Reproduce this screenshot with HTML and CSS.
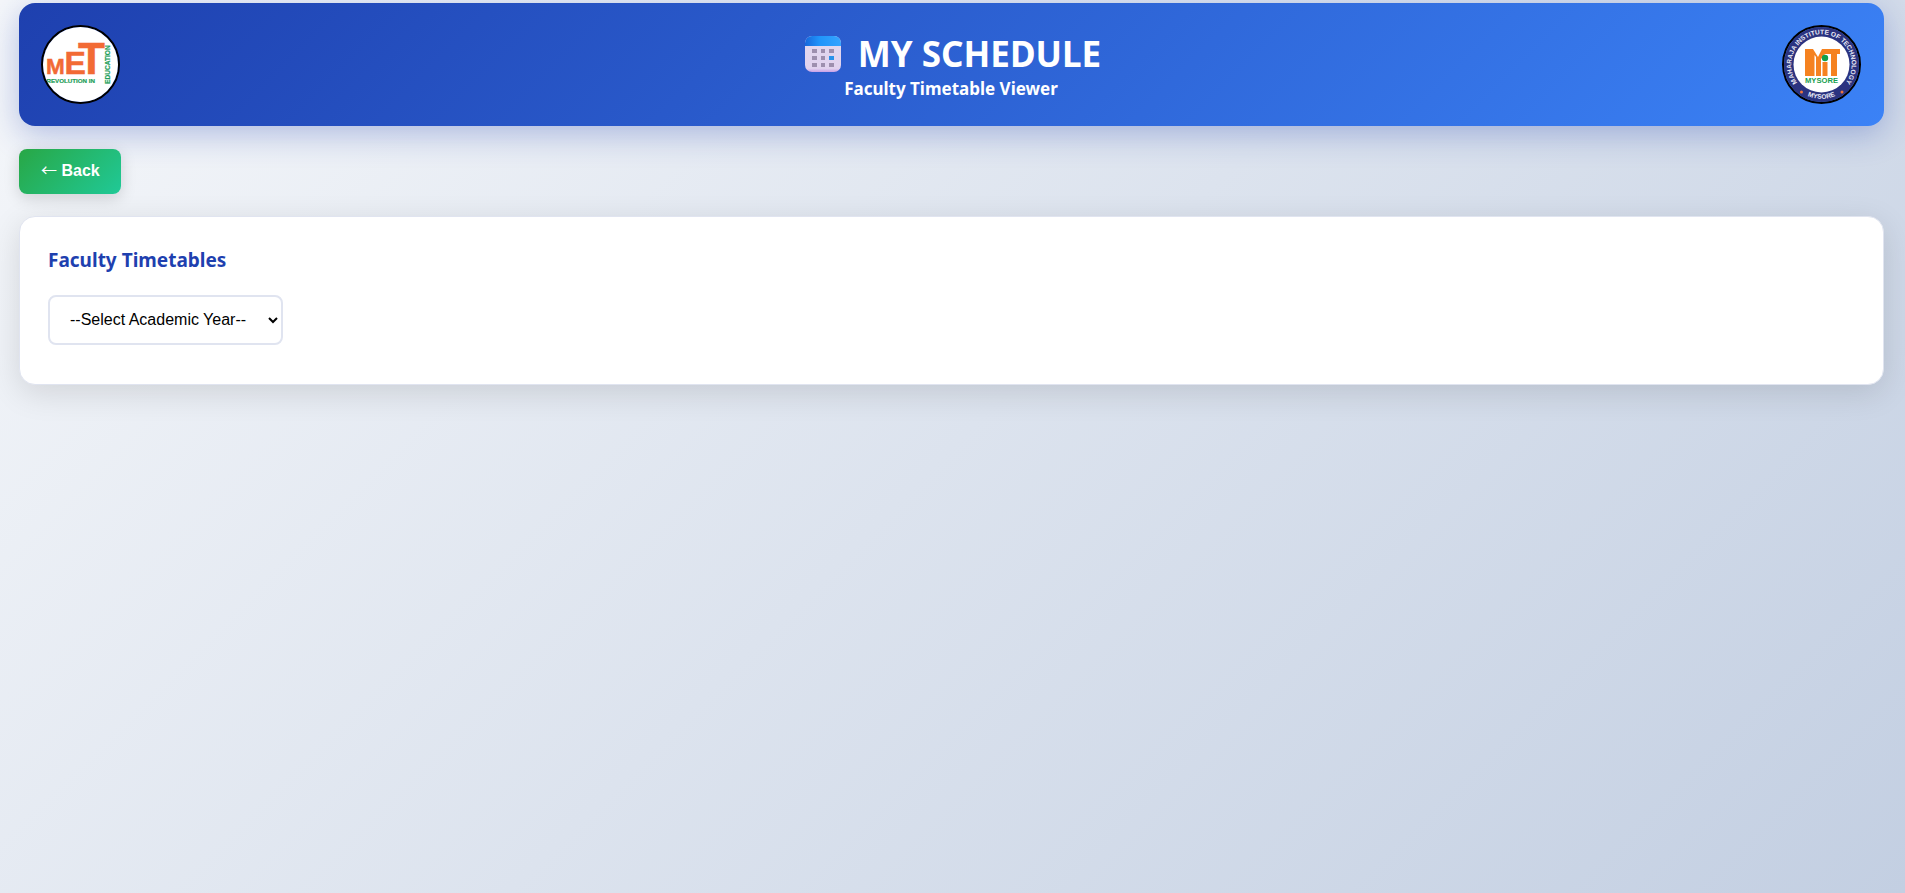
FILE: index.html
```html
<!DOCTYPE html>
<html lang="en">
<head>
    <meta charset="UTF-8">
    <meta name="viewport" content="width=device-width, initial-scale=1.0">
    <title>My Schedule</title>
    <link rel="stylesheet" href="styles.css">
</head>
<body>

    <!-- Header -->
    <header class="header">
        <svg class="logo" viewBox="0 0 75 75" role="img" aria-label="MET logo">
            <rect width="75" height="75" fill="#fff"/>
            <g class="logo-text" fill="#f26a35" stroke="#f26a35" stroke-width="0.5">
                <text x="3" y="47" font-size="22.5">M</text>
                <text x="21.5" y="47" font-size="32">E</text>
                <text x="35" y="47" font-size="44">T</text>
            </g>
            <g class="logo-text" fill="#1fa05a" stroke="#1fa05a" stroke-width="0.2">
                <text x="3.5" y="56" font-size="6.2">REVOLUTION IN</text>
                <text transform="translate(66.5 57) rotate(-90)" font-size="6.6">EDUCATION</text>
            </g>
        </svg>

        <div class="header-title">
            <h1>
                <svg class="calendar-icon" viewBox="0 0 36 36" aria-hidden="true">
                    <defs>
                        <linearGradient id="calTop" x1="0" y1="0" x2="1" y2="0">
                            <stop offset="0" stop-color="#1767dc"/>
                            <stop offset="0.4" stop-color="#2094fa"/>
                            <stop offset="1" stop-color="#35a4ff"/>
                        </linearGradient>
                        <linearGradient id="calPage" x1="0" y1="0" x2="0" y2="1">
                            <stop offset="0" stop-color="#e2d9ef"/>
                            <stop offset="0.9" stop-color="#e0d2ee"/>
                            <stop offset="1" stop-color="#c9a0e8"/>
                        </linearGradient>
                    </defs>
                    <rect width="36" height="36" rx="7" fill="url(#calPage)"/>
                    <path d="M0 10V7a7 7 0 0 1 7-7h22a7 7 0 0 1 7 7v3z" fill="url(#calTop)"/>
                    <path d="M7 13h5v4h-5zM16 13h4v4h-4zM24 13h5v4h-5zM7 20h5v4h-5zM16 20h4v4h-4zM7 27h5v4h-5zM16 27h4v4h-4zM24 27h5v4h-5z" fill="#9d8fae"/>
                    <path d="M24 20h5v4h-5z" fill="#2a92ea"/>
                </svg>
                MY SCHEDULE
            </h1>
            <p>Faculty Timetable Viewer</p>
        </div>

        <svg class="logo" viewBox="0 0 75 75" role="img" aria-label="Maharaja Institute of Technology Mysore logo">
            <defs>
                <path id="ringTop" d="M15.200 57.900A30.200 30.200 0 1 1 59.800 57.900"/>
                <path id="ringBottom" d="M17.500 65.400A34.400 34.400 0 0 0 57.500 65.400"/>
            </defs>
            <rect width="75" height="75" fill="#2b3380"/>
            <circle cx="37.5" cy="37.5" r="28" fill="#fff"/>
            <g class="logo-text" fill="#e9eaf5">
                <text text-anchor="middle" font-size="6.6"><textPath href="#ringTop" startOffset="50%">MAHARAJA INSTITUTE OF TECHNOLOGY</textPath></text>
                <text text-anchor="middle" font-size="6.6"><textPath href="#ringBottom" startOffset="50%">MYSORE</textPath></text>
            </g>
            <circle cx="17.5" cy="65" r="1.5" fill="#f0743a"/>
            <circle cx="58" cy="65" r="1.5" fill="#f0743a"/>
            <g fill="#f58220">
                <path d="M21 49V22h8l5 8 4-8h18v5h-3v22h-6V27h-6l-4 5v17h-5V30l-1.500-2v21z"/>
                <path d="M38.500 35h5v14h-5z"/>
            </g>
            <circle cx="41" cy="31" r="3.200" fill="#10a04c"/>
            <text class="logo-text" x="37.5" y="55.5" font-size="7.6" text-anchor="middle" fill="#18a050">MYSORE</text>
        </svg>
    </header>

    <button type="button" class="back-btn"><span class="arrow">←</span> Back</button>

    <!-- Timetable filter -->
    <main class="card">
        <h2>Faculty Timetables</h2>
        <select id="academicYear" name="academic_year" aria-label="Academic Year">
            <option value="">--Select Academic Year--</option>
        </select>
    </main>

</body>
</html>
```
FILE: styles.css
```css
* {
    box-sizing: border-box;
}

body {
    margin: 0;
    padding: 3px 21px 3px 19px;
    min-height: 100vh;
    font-family: "Segoe UI", "Noto Sans", sans-serif;
    background: linear-gradient(135deg, #f5f7fa 0%, #c3cfe2 100%);
}

/* Header */
.header {
    display: flex;
    justify-content: space-between;
    align-items: center;
    padding: 22px 23px 22px 22px;
    border-radius: 16px;
    color: white;
    background: linear-gradient(135deg, #1e40af, #3b82f6);
    box-shadow: 0 8px 32px rgba(30, 64, 175, 0.3);
}

.logo {
    width: 79px;
    height: 79px;
    border: 2px solid black;
    border-radius: 50%;
}

.logo-text {
    font-family: Arial, "Liberation Sans", sans-serif;
    font-weight: bold;
}

.header-title {
    padding-top: 4px;
    text-align: center;
}

.header-title h1 {
    display: flex;
    align-items: center;
    justify-content: center;
    gap: 17px;
    margin: 0;
    padding-left: 4px;
    font-size: 35px;
    line-height: 44px;
}

.header-title p {
    margin: 0;
    font-size: 17px;
    font-weight: bold;
    line-height: 25px;
}

.calendar-icon {
    width: 36px;
    height: 36px;
}

/* Back button */
.back-btn {
    display: block;
    margin: 23px 0 22px;
    padding: 12px 21px 13px 22px;
    border: none;
    border-radius: 8px;
    color: white;
    font-family: Arial, "Liberation Sans", sans-serif;
    font-size: 16px;
    font-weight: bold;
    line-height: 20px;
    cursor: pointer;
    background: linear-gradient(135deg, #28a745, #20c997);
    box-shadow: 0 4px 16px rgba(0, 0, 0, 0.15);
}

.back-btn .arrow {
    font-family: "Noto Sans CJK JP", sans-serif;
    font-weight: normal;
    line-height: 1;
}

/* Card */
.card {
    padding: 29px 28px 39px;
    border: 1px solid #e0e4f0;
    border-radius: 16px;
    background: white;
    box-shadow: 0 8px 32px rgba(0, 0, 0, 0.12);
}

.card h2 {
    margin: 0 0 21px;
    color: #1e40af;
    font-size: 19px;
    line-height: 28px;
}

.card select {
    display: block;
    padding: 13px 17px 14px 16px;
    border: 2px solid #e0e4f0;
    border-radius: 8px;
    color: black;
    background-color: white;
    font-family: Arial, "Liberation Sans", sans-serif;
    font-size: 16px;
    cursor: pointer;
}
```
